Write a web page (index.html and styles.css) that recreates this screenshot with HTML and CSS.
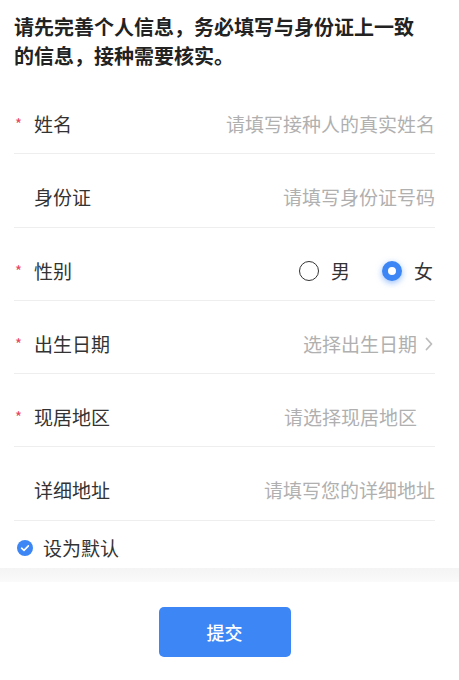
FILE: index.html
```html
<!DOCTYPE html>
<html lang="zh-CN">

<head>
    <meta charset="UTF-8">
    <meta name="viewport" content="width=device-width, initial-scale=1.0">
    <title>接种人信息</title>
    <link rel="stylesheet" href="styles.css">
</head>

<body>
    <div class="form">
        <p class="tip">请先完善个人信息，务必填写与身份证上一致的信息，接种需要核实。</p>

        <div class="row">
            <span class="mark">*</span>
            <span class="label">姓名</span>
            <span class="value">请填写接种人的真实姓名</span>
        </div>
        <div class="row">
            <span class="mark"></span>
            <span class="label">身份证</span>
            <span class="value">请填写身份证号码</span>
        </div>
        <div class="row">
            <span class="mark">*</span>
            <span class="label">性别</span>
            <div class="radios">
                <span class="radio"><i class="dot"></i>男</span>
                <span class="radio on"><i class="dot"></i>女</span>
            </div>
        </div>
        <div class="row">
            <span class="mark">*</span>
            <span class="label">出生日期</span>
            <span class="value">选择出生日期</span>
            <span class="arrow">
                <svg width="8" height="14" viewBox="0 0 8 14">
                    <polyline points="1.5,1.5 6.5,7 1.5,12.5" fill="none" stroke="#bdbdbd" stroke-width="1.8" stroke-linecap="round" stroke-linejoin="round" />
                </svg>
            </span>
        </div>
        <div class="row">
            <span class="mark">*</span>
            <span class="label">现居地区</span>
            <span class="value">请选择现居地区</span>
            <span class="arrow"></span>
        </div>
        <div class="row">
            <span class="mark"></span>
            <span class="label">详细地址</span>
            <span class="value">请填写您的详细地址</span>
        </div>

        <div class="check">
            <span class="tick">
                <svg width="16" height="16" viewBox="0 0 16 16">
                    <circle cx="8" cy="8" r="8" fill="#3d86f5" />
                    <polyline points="4.6,8.2 7,10.4 11.4,5.9" fill="none" stroke="#fff" stroke-width="1.6" stroke-linecap="round" stroke-linejoin="round" />
                </svg>
            </span>
            设为默认
        </div>
    </div>

    <div class="band"></div>

    <div class="footer">
        <button class="submit">提交</button>
    </div>
</body>

</html>
```

FILE: styles.css
```css
* {
    margin: 0;
    padding: 0;
    box-sizing: border-box;
}

body {
    width: 459px;
    background: #fff;
    color: #333;
    font-family: "Noto Sans CJK SC", "Noto Sans", sans-serif;
}

.form {
    padding: 0 24px 0 14px;
}

.tip {
    padding: 12px 10px 11px 0;
    font-size: 20px;
    line-height: 29px;
    font-weight: bold;
    color: #222;
}

.row {
    display: flex;
    align-items: center;
    padding: 30px 0 16.3px;
    line-height: 26px;
    font-size: 19px;
    border-bottom: 1px solid #eeeeee;
}

.mark {
    width: 20px;
    flex-shrink: 0;
    align-self: flex-start;
    padding-left: 1px;
    color: #e8455e;
    font-size: 15px;
}

.label {
    color: #333;
}

.value {
    margin-left: auto;
    color: #b0b0b0;
}

.arrow {
    width: 18px;
    display: flex;
    justify-content: flex-end;
    padding-right: 2px;
}

.arrow svg {
    display: block;
}

.radios {
    margin-left: auto;
    display: flex;
    gap: 32px;
    padding-right: 2px;
}

.radio {
    display: flex;
    align-items: center;
    gap: 12px;
}

.dot {
    width: 20px;
    height: 20px;
    border-radius: 50%;
    border: 1.5px solid #333;
}

.radio.on .dot {
    border: 6.5px solid #3d86f5;
    background: #fff;
    box-shadow: 0 2px 6px rgba(61, 134, 245, 0.55);
}

.check {
    display: flex;
    align-items: center;
    gap: 10px;
    padding: 15px 0 8px 3px;
    line-height: 24px;
    font-size: 19px;
    color: #333;
}

.tick svg {
    display: block;
}

.band {
    height: 14px;
    background: linear-gradient(#f4f4f4, #fafafa);
}

.footer {
    display: flex;
    justify-content: center;
    padding: 25px 10px 0 0;
}

.submit {
    width: 132px;
    height: 50px;
    border: none;
    border-radius: 5px;
    background: #3d86f5;
    color: #fff;
    font-family: "Noto Sans CJK SC", sans-serif;
    font-size: 18px;
    font-weight: 500;
}
```
